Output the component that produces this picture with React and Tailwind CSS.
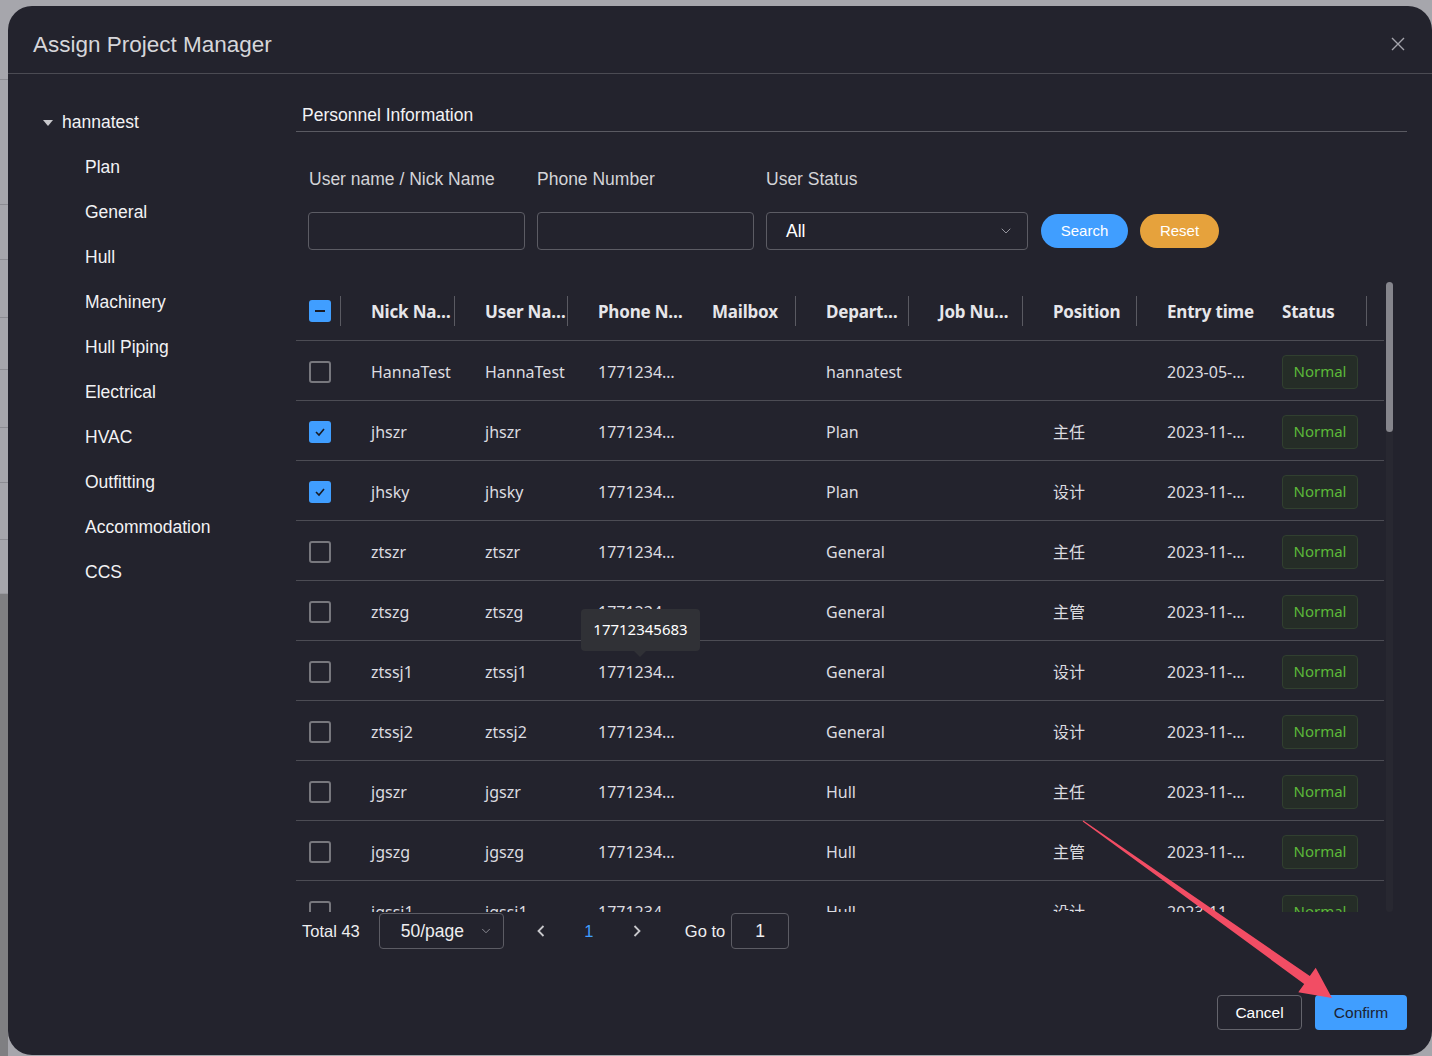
import { ChevronDown } from "lucide-react";

const rows = [
    { nick: "HannaTest", user: "HannaTest", dept: "hannatest", pos: "", date: "2023-05-…", checked: false },
    { nick: "jhszr", user: "jhszr", dept: "Plan", pos: "主任", date: "2023-11-…", checked: true },
    { nick: "jhsky", user: "jhsky", dept: "Plan", pos: "设计", date: "2023-11-…", checked: true },
    { nick: "ztszr", user: "ztszr", dept: "General", pos: "主任", date: "2023-11-…", checked: false },
    { nick: "ztszg", user: "ztszg", dept: "General", pos: "主管", date: "2023-11-…", checked: false },
    { nick: "ztssj1", user: "ztssj1", dept: "General", pos: "设计", date: "2023-11-…", checked: false, tip: true },
    { nick: "ztssj2", user: "ztssj2", dept: "General", pos: "设计", date: "2023-11-…", checked: false },
    { nick: "jgszr", user: "jgszr", dept: "Hull", pos: "主任", date: "2023-11-…", checked: false },
    { nick: "jgszg", user: "jgszg", dept: "Hull", pos: "主管", date: "2023-11-…", checked: false },
    { nick: "jgssj1", user: "jgssj1", dept: "Hull", pos: "设计", date: "2023-11-…", checked: false },
];

const tree = ["Plan", "General", "Hull", "Machinery", "Hull Piping", "Electrical", "HVAC", "Outfitting", "Accommodation", "CCS"];

const cols = "grid grid-cols-[45px_114px_113px_114px_114px_113px_114px_114px_115px_115px_1fr]";

function Checkbox({ state }) {
    if (state === "checked") {
        return (
            <span className="w-[22px] h-[22px] rounded-[3px] bg-[#409eff] flex items-center justify-center">
                <svg width="12" height="10" viewBox="0 0 12 10">
                    <polyline points="2,5 5,8 10,2" fill="none" stroke="#1a1d26" strokeWidth="1.6" />
                </svg>
            </span>
        );
    }
    if (state === "half") {
        return (
            <span className="w-[22px] h-[22px] rounded-[3px] bg-[#409eff] flex items-center justify-center">
                <span className="w-[10px] h-[2px] bg-[#1a1d26]"></span>
            </span>
        );
    }
    return <span className="w-[22px] h-[22px] rounded-[3px] border-2 border-[#77777d]"></span>;
}

function HeadCell({ label }) {
    return (
        <div className="flex items-center justify-between h-full">
            <span className="pl-[30px] pt-[2px] whitespace-nowrap tracking-[-0.2px]">{label}</span>
            <span className="w-px h-[30px] bg-[#5a5a62]"></span>
        </div>
    );
}

export default function App() {
    return (
        <div className="relative w-[1432px] h-[1056px] overflow-hidden bg-[#a6a6ac] flex pt-[6px] font-['Liberation_Sans',Arial,sans-serif]">
            {/* page behind the dialog */}
            <div className="w-[8px] flex flex-col -mt-[6px]">
                <div className="h-[80px] border-b border-[#8c8c92]"></div>
                <div className="h-[125px] border-b border-[#8c8c92]"></div>
                <div className="h-[55px] border-b border-[#8c8c92]"></div>
                <div className="h-[58px] border-b border-[#8c8c92]"></div>
                <div className="h-[52px] border-b border-[#8c8c92]"></div>
                <div className="h-[58px] border-b border-[#8c8c92]"></div>
                <div className="h-[55px] border-b border-[#8c8c92]"></div>
                <div className="h-[57px] border-b border-[#8c8c92]"></div>
                <div className="h-[54px] border-b border-[#9a9aa0]"></div>
                <div className="flex-1 bg-[#7f7f82]"></div>
            </div>

            <div className="w-[1424px] h-[1049px] bg-[#23232d] rounded-[24px] flex flex-col text-[#e4e4e8]">
                {/* header */}
                <div className="h-[68px] shrink-0 border-b border-[#4b4b53] flex items-center justify-between pl-[25px] pr-[27px]">
                    <h1 className="text-[22.5px] text-[#d6d6da] pt-[10px]">Assign Project Manager</h1>
                    <svg width="14" height="14" viewBox="0 0 14 14" className="mt-[8px]">
                        <path d="M1 1L13 13M13 1L1 13" stroke="#a4a4ac" strokeWidth="1.4" />
                    </svg>
                </div>

                <div className="flex">
                    {/* tree */}
                    <div className="w-[288px] shrink-0 pt-[26px] pl-[35px] text-[17.5px] text-[#f2f2f4]">
                        <div className="h-[45px] flex items-center gap-[9px]">
                            <svg width="10" height="6" viewBox="0 0 10 6">
                                <polygon points="0,0 10,0 5,6" fill="#c8c8cc" />
                            </svg>
                            <span>hannatest</span>
                        </div>
                        {tree.map((t) => (
                            <div key={t} className="h-[45px] flex items-center pl-[42px]">
                                {t}
                            </div>
                        ))}
                    </div>

                    {/* right panel */}
                    <div className="w-[1111px] flex flex-col">
                        <div className="mt-[31px] pl-[6px] pb-[6px] border-b border-[#5a5a62] text-[17.5px] leading-[20px] text-[#f2f2f4]">
                            Personnel Information
                        </div>

                        {/* filters */}
                        <div className="mt-[37px] pl-[12px] flex items-end text-[17.5px]">
                            <div className="flex flex-col gap-[23px] w-[217px]">
                                <span className="leading-[20px] pl-px text-[#d4d4d8]">User name / Nick Name</span>
                                <div className="h-[38px] rounded-[4px] border border-[#5c5c64]"></div>
                            </div>
                            <div className="flex flex-col gap-[23px] w-[217px] ml-[12px]">
                                <span className="leading-[20px] text-[#d4d4d8]">Phone Number</span>
                                <div className="h-[38px] rounded-[4px] border border-[#5c5c64]"></div>
                            </div>
                            <div className="flex flex-col gap-[23px] w-[262px] ml-[12px]">
                                <span className="leading-[20px] text-[#d4d4d8]">User Status</span>
                                <div className="h-[38px] rounded-[4px] border border-[#5c5c64] flex items-center justify-between pl-[19px] pr-[13px]">
                                    <span className="text-white">All</span>
                                    <ChevronDown size={16} strokeWidth={1.3} color="#a8a8b0" />
                                </div>
                            </div>
                            <button className="ml-[13px] mb-[2px] w-[87px] h-[34px] rounded-full bg-[#409eff] text-white text-[15px]">
                                Search
                            </button>
                            <button className="ml-[12px] mb-[2px] w-[79px] h-[34px] rounded-full bg-[#e6a23c] text-white text-[15px]">
                                Reset
                            </button>
                        </div>

                        {/* table */}
                        <div className="mt-[32px] flex h-[630px]">
                            <div className="w-[1088px] overflow-hidden font-['Noto_Sans','Noto_Sans_CJK_SC',sans-serif]">
                                <div className={`${cols} h-[59px] border-b border-[#4c4c54] text-[17px] font-bold text-[#e6e6ea]`}>
                                    <div className="flex items-center justify-between pl-[13px] h-full">
                                        <Checkbox state="half" />
                                        <span className="w-px h-[30px] bg-[#5a5a62]"></span>
                                    </div>
                                    <HeadCell label="Nick Na…" />
                                    <HeadCell label="User Na…" />
                                    <HeadCell label="Phone N…" />
                                    <HeadCell label="Mailbox" />
                                    <HeadCell label="Depart…" />
                                    <HeadCell label="Job Nu…" />
                                    <HeadCell label="Position" />
                                    <HeadCell label="Entry time" />
                                    <HeadCell label="Status" />
                                    <div></div>
                                </div>
                                {rows.map((r) => (
                                    <div key={r.nick} className={`${cols} h-[60px] border-b border-[#4c4c54] items-center text-[16px] text-[#dcdce0] pt-[2px]`}>
                                        <div className="pl-[13px] flex">
                                            <Checkbox state={r.checked ? "checked" : "none"} />
                                        </div>
                                        <div className="pl-[30px]">{r.nick}</div>
                                        <div className="pl-[30px]">{r.user}</div>
                                        <div className="pl-[30px] relative">
                                            1771234…
                                            {r.tip && (
                                                <div className="absolute left-[13px] -top-[51px] w-[119px] h-[42px] rounded-[4px] bg-[#303136] flex items-center justify-center text-[15px] text-white">
                                                    17712345683
                                                    <span className="absolute left-[53px] -bottom-[6px] w-0 h-0 border-l-[6px] border-r-[6px] border-t-[6px] border-l-transparent border-r-transparent border-t-[#303136]"></span>
                                                </div>
                                            )}
                                        </div>
                                        <div className="pl-[30px]"></div>
                                        <div className="pl-[30px]">{r.dept}</div>
                                        <div className="pl-[30px]"></div>
                                        <div className="pl-[30px]">{r.pos}</div>
                                        <div className="pl-[30px] whitespace-nowrap">{r.date}</div>
                                        <div className="pl-[30px]">
                                            <span className="w-[76px] h-[34px] rounded-[4px] border border-[#31402f] bg-[#252d27] text-[#5cb939] text-[15px] flex items-center justify-center">
                                                Normal
                                            </span>
                                        </div>
                                        <div></div>
                                    </div>
                                ))}
                            </div>
                            <div className="ml-[2px] w-[7px] rounded-full bg-[#282831]">
                                <div className="h-[150px] rounded-full bg-[#85858c]"></div>
                            </div>
                        </div>

                        {/* pagination */}
                        <div className="mt-px h-[36px] flex items-center text-[16.5px] text-[#eeeef0]">
                            <span className="ml-[6px]">Total 43</span>
                            <div className="ml-[19px] w-[125px] h-[36px] rounded-[4px] border border-[#5c5c64] flex items-center justify-between pl-[21px] pr-[10px] text-[17.5px]">
                                <span>50/page</span>
                                <ChevronDown size={14} strokeWidth={1.3} color="#a8a8b0" />
                            </div>
                            <span className="ml-[21px] w-[32px] flex justify-center">
                                <svg width="8" height="12" viewBox="0 0 8 12">
                                    <polyline points="6.5,1 1.5,6 6.5,11" fill="none" stroke="#c8c8cc" strokeWidth="1.8" />
                                </svg>
                            </span>
                            <span className="ml-[16px] w-[32px] text-center text-[#409eff]">1</span>
                            <span className="ml-[16px] w-[32px] flex justify-center">
                                <svg width="8" height="12" viewBox="0 0 8 12">
                                    <polyline points="1.5,1 6.5,6 1.5,11" fill="none" stroke="#c8c8cc" strokeWidth="1.8" />
                                </svg>
                            </span>
                            <span className="ml-[32px]">Go to</span>
                            <div className="ml-[6px] w-[58px] h-[36px] rounded-[4px] border border-[#5c5c64] flex items-center justify-center text-[17.5px]">
                                1
                            </div>
                        </div>
                    </div>
                </div>

                {/* footer */}
                <div className="mt-[46px] flex justify-end gap-[13px] pr-[25px]">
                    <button className="w-[85px] h-[35px] rounded-[4px] border border-[#64646c] text-white text-[15.5px]">
                        Cancel
                    </button>
                    <button className="w-[92px] h-[35px] rounded-[4px] bg-[#409eff] text-[#1b2232] text-[15.5px]">
                        Confirm
                    </button>
                </div>
            </div>

            {/* annotation arrow */}
            <svg className="absolute inset-0 pointer-events-none" width="1432" height="1056">
                <polygon
                    points="1082.7,821.4 1304.2,984 1298.3,992.2 1332,998 1315.7,967.8 1309.8,976 1083.3,820.6"
                    fill="#f24d64"
                />
            </svg>
        </div>
    );
}
